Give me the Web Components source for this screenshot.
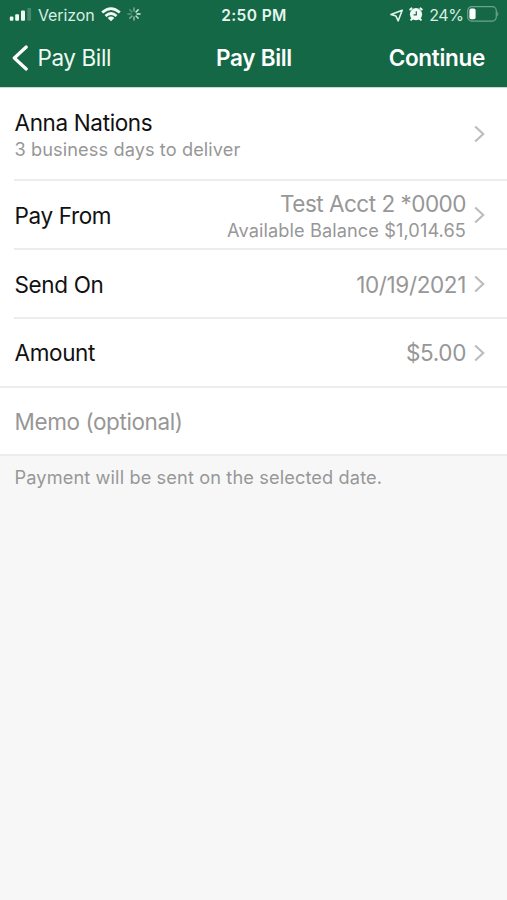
<!DOCTYPE html>
<html lang="en"><head><meta charset="utf-8"><title>Pay Bill</title>
<style>
html,body{margin:0;height:100%}
body{background:#f7f7f7;font-family:Inter,"Liberation Sans",sans-serif;font-feature-settings:"calt" 0}
</style></head><body>
<pay-screen></pay-screen>
<script>
const define=(name,html)=>{
  const t=document.createElement('template');t.innerHTML=html;
  customElements.define(name,class extends HTMLElement{
    constructor(){super();this.attachShadow({mode:'open'}).append(t.content.cloneNode(true));}
  });
};

define('status-bar',`<style>
:host{display:grid;grid-template-columns:1fr auto 1fr;height:30px;box-sizing:border-box;padding:0 8px 0 9px;color:#d9eee4;font-size:16px;line-height:30px;white-space:nowrap}
div{display:flex;align-items:center;height:30px}
.r{justify-content:flex-end}
.t{font-weight:600;font-size:15.5px;color:#e6f6ee;letter-spacing:.4px}
.t span{padding-top:1px}
svg{display:block;flex:none}
</style>
<div><svg width="23" height="16" viewBox="0 0 23 16" fill="#f1fbf6"><rect x=".8" y="9.5" width="3.6" height="4.2" rx="1"/><rect x="6.2" y="7.2" width="3.8" height="6.5" rx="1"/><rect x="12" y="3.4" width="4" height="10.3" rx="1"/><rect x="18.3" y="1" width="3.8" height="12.7" rx="1" opacity=".22"/></svg><span style="margin-left:6px;letter-spacing:-.12px">Verizon</span>
<svg style="margin-left:6px;margin-top:-1px" width="20" height="15" viewBox="0 0 20 15" fill="none" stroke="#f1fbf6" stroke-width="2.7"><path d="M1.2 5.6Q10-2.4 18.8 5.6M4.5 9Q10 4 15.5 9"/><path d="M10 14.3L6.7 11Q10 8.2 13.3 11Z" fill="#f1fbf6" stroke="none"/></svg>
<svg style="margin-left:6px;margin-top:-2px" width="14" height="14" viewBox="-7 -7 14 14" stroke="#dff2e8" stroke-width="1.5" stroke-linecap="round"><path d="M0-3V-6" opacity=".5"/><path d="M2.1-2.1L4.2-4.2" opacity=".9"/><path d="M3 0H6"/><path d="M2.1 2.1L4.2 4.2" opacity=".8"/><path d="M0 3V6" opacity=".6"/><path d="M-2.1 2.1L-4.2 4.2" opacity=".5"/><path d="M-3 0H-6" opacity=".35"/><path d="M-2.1-2.1L-4.2-4.2" opacity=".3"/></svg></div>
<div class="t"><span>2:50 PM</span></div>
<div class="r"><svg width="13" height="13" viewBox="0 0 13 13" fill="none" stroke="#e3f4eb" stroke-width="1.6" stroke-linejoin="round"><path d="M12.2 1.2L1 5.6L5.9 7L8.2 11.8Z"/></svg>
<svg style="margin-left:6px;margin-top:-2px" width="14" height="14" viewBox="0 0 14 14"><circle cx="7" cy="7.2" r="6.1" fill="#f1fbf6"/><path d="M1.3 2.5L2.5 1.4M12.7 2.5L11.5 1.4M2.2 12.8L3.6 11.5M11.8 12.8L10.4 11.5" stroke="#f1fbf6" stroke-width="2" stroke-linecap="round"/><path d="M7.3 4.3V7.9H4.6" fill="none" stroke="#156846" stroke-width="1.2"/></svg>
<span style="margin-left:6px;letter-spacing:-.4px">24%</span>
<svg style="margin-left:3.5px;margin-top:-2px" width="32" height="16" viewBox="0 0 32 16"><rect x=".7" y=".7" width="28.6" height="14.4" rx="4" fill="none" stroke="#6ea38b" stroke-width="1.2"/><rect x="2.4" y="2.6" width="6.2" height="10.6" rx="1.8" fill="#fff"/><path d="M30.4 5.5Q32.2 8 30.4 10.5Z" fill="#80b09b"/></svg></div>`);

define('nav-bar',`<style>
:host{display:grid;grid-template-columns:1fr auto 1fr;align-items:center;height:56px;box-sizing:border-box;padding:0 22px 0 23px;color:#eefaf3;font-size:22.5px;line-height:56px;white-space:nowrap}
.b{display:flex;align-items:center;margin-left:-11px;letter-spacing:-.4px}
.s{font-weight:600;color:#fff;letter-spacing:-.3px}.r{text-align:right}
svg{display:block}
</style><div class="b"><svg width="17" height="26" viewBox="0 0 17 26" fill="none" stroke="#fff" stroke-width="3.2" stroke-linecap="round" stroke-linejoin="round"><path d="M14.2 2L2.3 13L14.2 24"/></svg><span style="margin-left:8.5px"><slot name="back"></slot></span></div><div class="s"><slot></slot></div><div class="s r"><slot name="action"></slot></div>`);

define('list-row',`<style>
:host{display:flex;align-items:center;box-sizing:border-box;height:var(--h,69px);padding-right:22px;margin-left:14px;border-bottom:2px solid #ececec;background:#fff;white-space:nowrap;font-size:22.5px;line-height:27px;letter-spacing:-.36px;color:#111}
:host([full]){margin-left:0;padding-left:14px}
.l{padding:var(--label-top,1px) 0 0 .5px}
.v{margin-left:auto;padding-top:var(--value-top,1px);text-align:right;color:#979797}
svg{display:block;margin-left:8px}
:host([plain]) svg{display:none}
</style><div class="l"><slot></slot></div><div class="v"><slot name="value"></slot></div>
<svg width="11" height="18" viewBox="0 0 11 18" fill="none" stroke="#bdbdbd" stroke-width="2.2"><path d="M1.2 1.5L9.2 9L1.2 16.5"/></svg>`);

define('pay-screen',`<style>
:host{display:block}
header{box-sizing:border-box;background:#156846;height:88px;border-bottom:1px solid #c3dbd0}
main{background:#fff}
small{display:block;font-size:18.2px;line-height:26px;letter-spacing:.09px;color:#979797}
.m{color:#979797;letter-spacing:-.4px}
.a{letter-spacing:-.5px}
p{margin:0;padding:8px 14.5px;font-size:18.2px;line-height:26px;letter-spacing:.12px;color:#979797;white-space:nowrap}
</style><header><status-bar></status-bar><nav-bar><span slot="back">Pay Bill</span><span>Pay Bill</span><span slot="action">Continue</span></nav-bar></header>
<main><list-row style="--h:93px;--label-top:4px"><span>Anna Nations</span><small><span>3 business days to deliver</span></small></list-row>
<list-row style="--value-top:3px"><span>Pay From</span><span class="a" slot="value">Test Acct 2 *0000</span><small slot="value"><span>Available Balance $1,014.65</span></small></list-row>
<list-row><span>Send On</span><span slot="value">10/19/2021</span></list-row>
<list-row full style="--label-top:0px;--value-top:0px"><span>Amount</span><span slot="value">$5.00</span></list-row>
<list-row full plain style="--h:68px;--label-top:0px"><span class="m">Memo (optional)</span></list-row></main>
<p><span>Payment will be sent on the selected date.</span></p>`);
</script></body></html>
